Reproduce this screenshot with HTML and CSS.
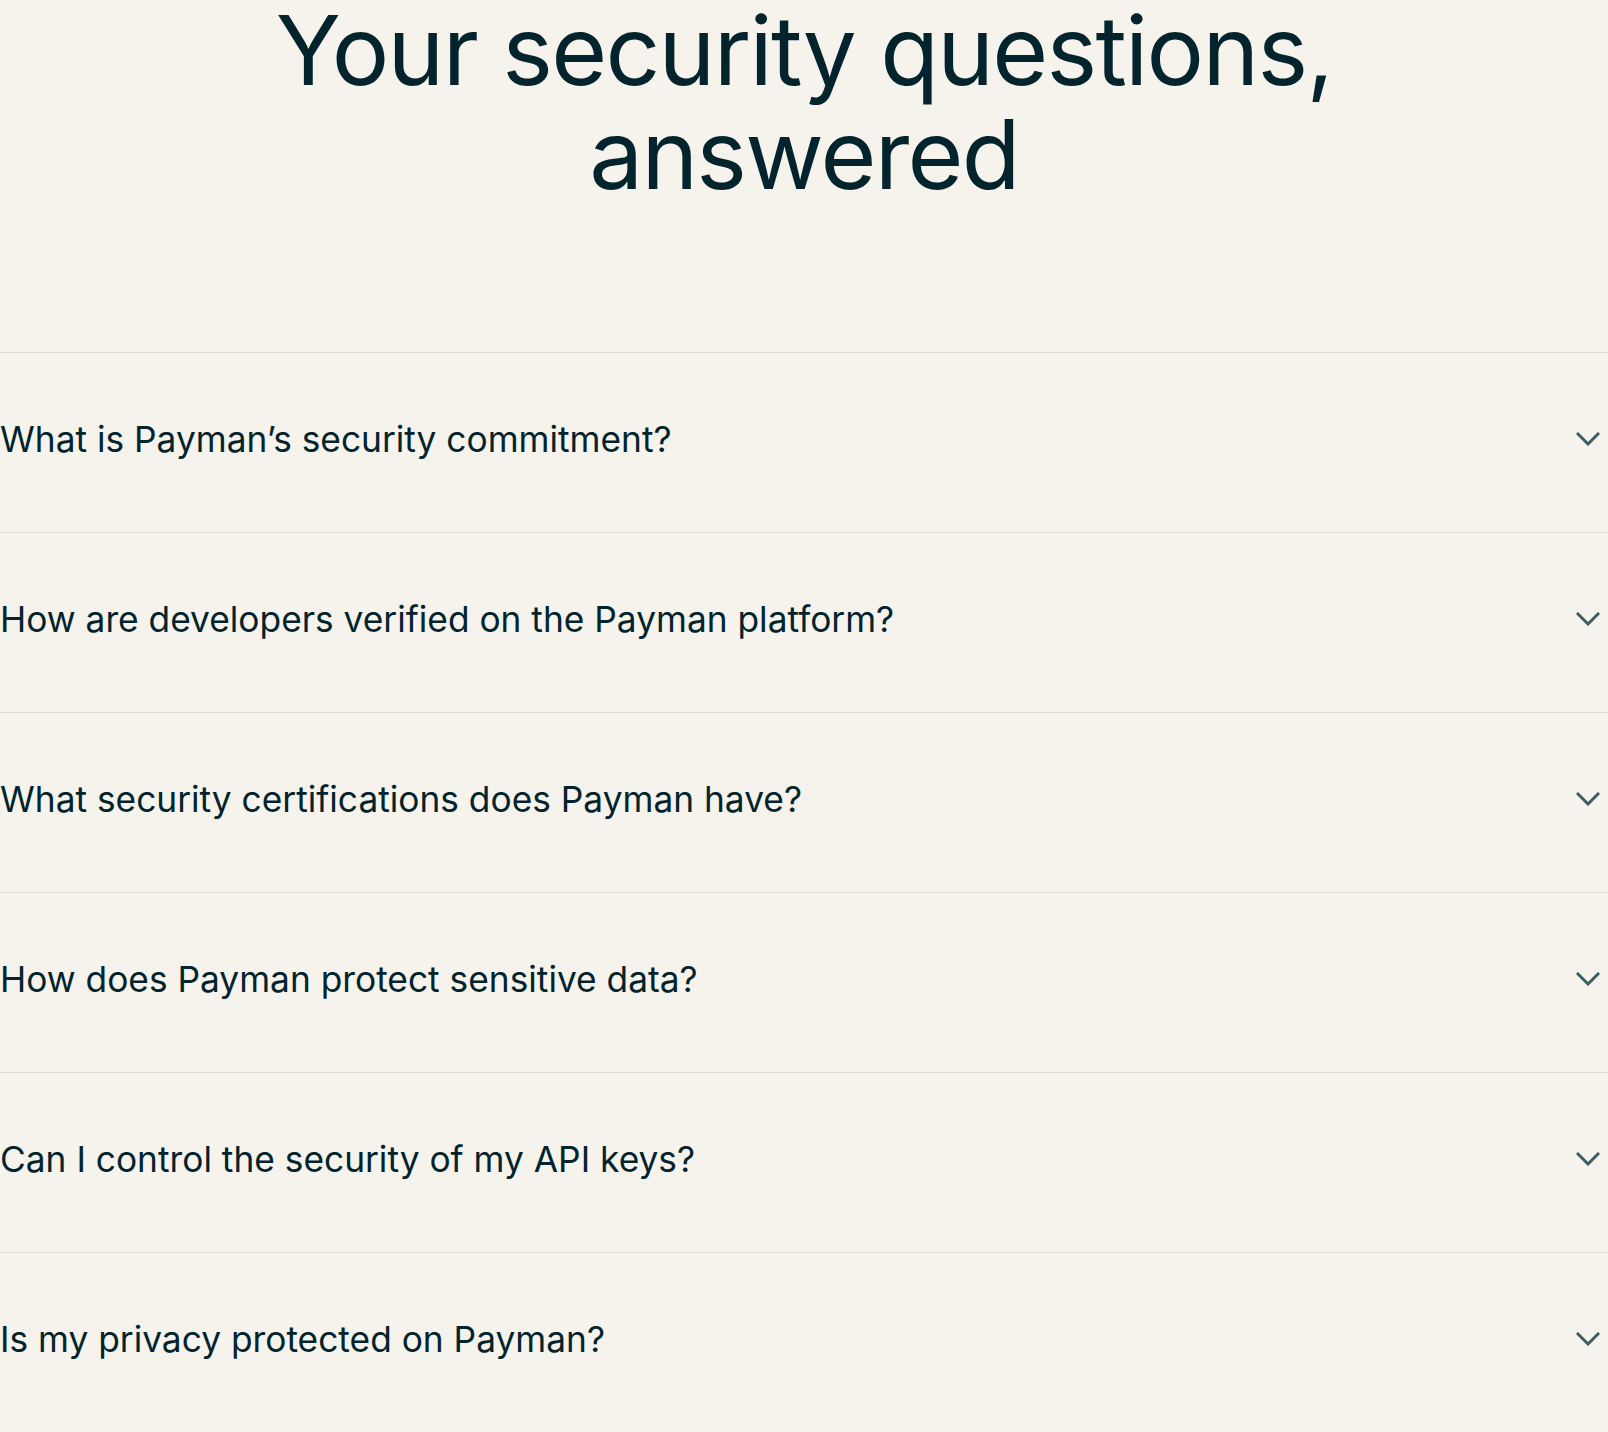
FILE: index.html
```html
<!DOCTYPE html>
<html lang="en">
<head>
<meta charset="utf-8">
<title>Security FAQ</title>
<link rel="stylesheet" href="styles.css">
</head>
<body>
<section class="faq">
  <h2 class="faq-title">Your security questions,<br>answered</h2>
  <ul class="faq-list">
    <li class="faq-item"><span class="faq-q">What is Payman’s security commitment?</span><svg class="chev" viewBox="0 0 24 14" width="24" height="14"><path d="M2 2l10 10 10-10"/></svg></li>
    <li class="faq-item"><span class="faq-q">How are developers verified on the Payman platform?</span><svg class="chev" viewBox="0 0 24 14" width="24" height="14"><path d="M2 2l10 10 10-10"/></svg></li>
    <li class="faq-item"><span class="faq-q">What security certifications does Payman have?</span><svg class="chev" viewBox="0 0 24 14" width="24" height="14"><path d="M2 2l10 10 10-10"/></svg></li>
    <li class="faq-item"><span class="faq-q">How does Payman protect sensitive data?</span><svg class="chev" viewBox="0 0 24 14" width="24" height="14"><path d="M2 2l10 10 10-10"/></svg></li>
    <li class="faq-item"><span class="faq-q">Can I control the security of my API keys?</span><svg class="chev" viewBox="0 0 24 14" width="24" height="14"><path d="M2 2l10 10 10-10"/></svg></li>
    <li class="faq-item"><span class="faq-q">Is my privacy protected on Payman?</span><svg class="chev" viewBox="0 0 24 14" width="24" height="14"><path d="M2 2l10 10 10-10"/></svg></li>
  </ul>
</section>
</body>
</html>
```
FILE: styles.css
```css
html, body {
  margin: 0;
  padding: 0;
  background: #f6f3ed;
}
body {
  font-family: Inter, "Noto Sans", sans-serif;
  color: #03242c;
  overflow: hidden;
}
.faq {
  display: flex;
  flex-direction: column;
}
.faq-title {
  margin: -2px 0 0;
  text-align: center;
  font-weight: 400;
  font-size: 96px;
  line-height: 104px;
  letter-spacing: -0.018em;
  padding-bottom: 146px;
}
.faq-list {
  list-style: none;
  margin: 0;
  padding: 0;
}
.faq-item {
  display: flex;
  align-items: center;
  justify-content: space-between;
  box-sizing: border-box;
  height: 180px;
  border-top: 1.5px solid #dedbd1;
  padding-right: 8px;
  padding-bottom: 7px;
}
.faq-q {
  font-size: 35.3px;
  letter-spacing: 0;
}
.chev {
  fill: none;
  stroke: #3d5e64;
  stroke-width: 3;
  stroke-linecap: square;
}
```
